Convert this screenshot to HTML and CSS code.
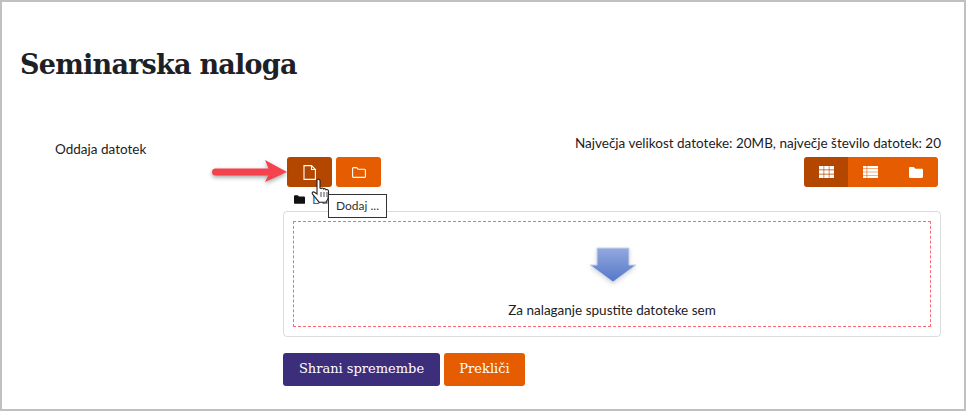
FILE: index.html
```html
<!DOCTYPE html>
<html lang="en">
<head>
    <meta charset="UTF-8">
    <title>Seminarska naloga</title>
    <link rel="stylesheet" href="styles.css">
</head>
<body>
    <div class="frame">
        <h1>Seminarska naloga</h1>
        <div class="form-row">
            <div class="form-label">Oddaja datotek</div>
            <div class="form-field">
                <div class="limits">Največja velikost datoteke: 20MB, največje število datotek: 20</div>
                <div class="toolbar">
                    <div class="file-buttons">
                        <div class="btn-icon active">
                            <svg width="13" height="15" viewBox="0 0 13 15" fill="none" stroke="#fff" stroke-width="1.1"><path d="M1 .6h7.500l3.900 3.900v9.900H1z"/><path d="M8.500.6v3.900h3.900"/></svg>
                        </div>
                        <div class="btn-icon">
                            <svg width="14" height="11" viewBox="0 0 14 11" fill="none" stroke="#fff" stroke-width="1.1"><path d="M.6 9.400V1.600C.6 1 1 .6 1.600.6h3l1.500 1.700h6.300c.6 0 1 .4 1 1v6.100c0 .6-.4 1-1 1H1.600c-.6 0-1-.4-1-1z"/></svg>
                        </div>
                    </div>
                    <div class="view-buttons">
                        <div class="view-btn active">
                            <svg width="15" height="12" viewBox="0 0 15 12" fill="#fff"><path d="M0 0h4.600v3.600H0zM5.200 0h4.600v3.600H5.200zM10.400 0H15v3.600h-4.600zM0 4.200h4.600v3.600H0zM5.200 4.200h4.600v3.600H5.200zM10.400 4.200H15v3.600h-4.600zM0 8.400h4.600V12H0zM5.200 8.400h4.600V12H5.200zM10.400 8.400H15V12h-4.600z"/></svg>
                        </div>
                        <div class="view-btn">
                            <svg width="15" height="12" viewBox="0 0 15 12" fill="#fff"><path d="M0 0h3.600v2.600H0zM4.200 0H15v2.600H4.200zM0 3.100h3.600v2.600H0zM4.200 3.100H15v2.600H4.200zM0 6.300h3.600v2.600H0zM4.200 6.300H15v2.600H4.200zM0 9.400h3.600V12H0zM4.200 9.400H15V12H4.200z"/></svg>
                        </div>
                        <div class="view-btn">
                            <svg width="14" height="11" viewBox="0 0 14 11" fill="#fff"><path d="M0 1.200C0 .5.5 0 1.200 0h3.600l1.500 1.700h6.500c.7 0 1.200.5 1.200 1.200v6.900c0 .7-.5 1.200-1.200 1.200H1.200C.5 11 0 10.500 0 9.800z"/></svg>
                        </div>
                    </div>
                </div>
                <div class="path-row">
                    <svg width="11" height="9" viewBox="0 0 14 11" fill="#111"><path d="M0 1.200C0 .5.5 0 1.200 0h3.600l1.500 1.700h6.500c.7 0 1.200.5 1.200 1.200v6.900c0 .7-.5 1.200-1.200 1.200H1.200C.5 11 0 10.500 0 9.800z"/></svg>
                    <span class="path-link">Da</span>
                </div>
                <div class="drop-outer">
                    <div class="drop-inner">
                        <svg class="drop-arrow" width="48" height="40" viewBox="0 0 48 40">
                            <defs>
                                <linearGradient id="arrowFill" x1="0" y1="0" x2="0" y2="1">
                                    <stop offset="0" stop-color="#93a9de"/>
                                    <stop offset="1" stop-color="#5577c9"/>
                                </linearGradient>
                            </defs>
                            <path d="M9 2h32v17h7L25 36 2 19h7z" fill="url(#arrowFill)" stroke="#c9d5f0" stroke-width="1"/>
                        </svg>
                        <div class="drop-text">Za nalaganje spustite datoteke sem</div>
                    </div>
                </div>
                <div class="actions">
                    <div class="btn btn-save">Shrani spremembe</div>
                    <div class="btn btn-cancel">Prekliči</div>
                </div>
            </div>
        </div>

        <!-- annotation laid over the screenshot -->
        <svg class="red-arrow" width="80" height="32" viewBox="0 0 80 32">
            <path d="M3.500 15h52" stroke="#f4434c" stroke-width="7" stroke-linecap="round"/>
            <path d="M53 3l22 12-22 10 5-10z" fill="#f4434c"/>
        </svg>
        <svg class="cursor" width="20" height="26" viewBox="0 0 20 26">
            <path d="M6 2c1-1 2.500-1 3 .5V10l1 .5c1-1 2-.5 2.500.5 1-.8 2-.3 2.500.7 1-.5 2.500 0 2.500 1.500v4c0 3-1 5-2.500 7H8c-1.500-2-4-5-6.500-8-1-1.500.5-3 2-2L6 16z" fill="#fff" stroke="#222" stroke-width="1.100"/>
            <path d="M10 14v5M13 14v5M16 14v5" stroke="#222" stroke-width=".8"/>
        </svg>
        <div class="tooltip">Dodaj ...</div>
    </div>
</body>
</html>
```

FILE: styles.css
```css
html, body {
    margin: 0;
    padding: 0;
    background: #fff;
}
body {
    font-family: Lato, "Open Sans", sans-serif;
    font-size: 13.5px;
    color: #1d2125;
}
.frame {
    position: relative;
    box-sizing: border-box;
    width: 966px;
    height: 411px;
    border: 2px solid #c0c0c0;
    padding: 44px 23px 0 18px;
}
h1 {
    margin: 0;
    font-family: "DejaVu Serif", serif;
    font-size: 27px;
    line-height: 38px;
    font-weight: 700;
    letter-spacing: -0.75px;
    color: #1d2125;
}
.form-row {
    display: flex;
    margin-top: 49px;
}
.form-label {
    width: 263px;
    padding: 7px 0 0 35px;
    box-sizing: border-box;
    line-height: 18px;
}
.form-field {
    flex: 1;
}
.limits {
    text-align: right;
    line-height: 18px;
    padding-top: 1px;
}
.toolbar {
    display: flex;
    justify-content: space-between;
    padding: 5px 3px 0 4px;
}
.file-buttons {
    display: flex;
    gap: 4px;
}
.btn-icon {
    width: 45px;
    height: 30px;
    border-radius: 3px;
    background: #e65c00;
    display: flex;
    align-items: center;
    justify-content: center;
}
.btn-icon.active {
    background: #b34700;
}
.view-buttons {
    display: flex;
    border-radius: 3px;
    overflow: hidden;
}
.view-btn {
    width: 45px;
    height: 30px;
    background: #e65c00;
    display: flex;
    align-items: center;
    justify-content: center;
}
.view-btn.active {
    width: 44px;
    background: #b34700;
}
.path-row {
    display: flex;
    align-items: center;
    gap: 7px;
    height: 24px;
    padding-left: 11px;
    box-sizing: border-box;
}
.path-link {
    color: #3d5fa8;
    font-size: 13px;
}
.drop-outer {
    box-sizing: border-box;
    height: 126px;
    border: 1px solid #dcdcdc;
    border-radius: 4px;
    padding: 9px;
}
.drop-inner {
    box-sizing: border-box;
    height: 106px;
    border: 1px dashed #fb6a72;
    text-align: center;
}
.drop-arrow {
    display: block;
    margin: 24px auto 0;
    filter: drop-shadow(0 2px 2px rgba(0, 0, 0, 0.15));
}
.drop-text {
    margin-top: 15px;
    line-height: 18px;
}
.actions {
    display: flex;
    gap: 4px;
    margin-top: 16px;
}
.btn {
    height: 33px;
    border-radius: 3px;
    color: #fff;
    font-family: "DejaVu Serif", serif;
    font-size: 13px;
    line-height: 31px;
    text-align: center;
}
.btn-save {
    width: 157px;
    background: #3d2e7c;
}
.btn-cancel {
    width: 81px;
    background: #e65c00;
}
.red-arrow {
    position: absolute;
    left: 210px;
    top: 155px;
    filter: drop-shadow(0 2px 2px rgba(0, 0, 0, 0.35));
}
.cursor {
    position: absolute;
    left: 309px;
    top: 176px;
}
.tooltip {
    position: absolute;
    left: 326px;
    top: 192px;
    border: 1px solid #333;
    background: #fff;
    padding: 0 7px;
    font-size: 12px;
    line-height: 22px;
    color: #333;
}
```
